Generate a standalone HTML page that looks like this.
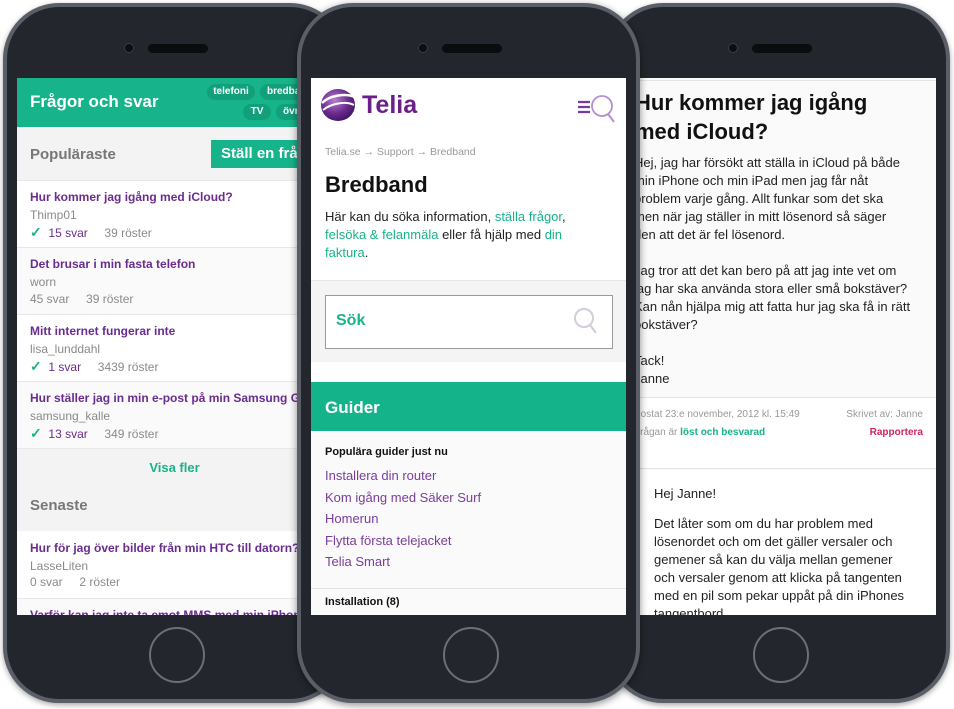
<!DOCTYPE html>
<html><head><meta charset="utf-8"><style>
*{margin:0;padding:0;box-sizing:border-box}
body{width:954px;height:709px;background:#fff;position:relative;overflow:hidden;font-family:"Liberation Sans",Arial,sans-serif}
.ph{position:absolute;top:3px;width:343px;height:700px;border-radius:56px;background:#23262c;border:4px solid #5a5e66;box-shadow:0 2px 6px rgba(0,0,0,.35)}
.cam{position:absolute;top:36px;width:10px;height:10px;border-radius:50%;background:#0d0e10;border:1px solid #3a3d44}
.spk{position:absolute;top:37px;width:60px;height:9px;border-radius:5px;background:#0b0c0e}
.btn{position:absolute;top:620px;width:56px;height:56px;border-radius:50%;border:2.5px solid #6a6f78}
.scr{position:absolute;top:71px;left:10px;width:315px;height:537px;overflow:hidden;background:#fff}
.a{position:absolute;white-space:nowrap}
.g{color:#17b38a}.p{color:#6a2c8e}
.lt{font-size:12px;font-weight:bold;color:#6a2c8e}
.lu{font-size:12px;color:#8a8a8a}
.chk{color:#17b38a;font-weight:bold;font-size:14px}
</style></head><body>

<!-- LEFT PHONE -->
<div class="ph" style="left:3px;z-index:1">
 <div class="cam" style="left:117px"></div><div class="spk" style="left:141px"></div>
 <div class="btn" style="left:142px"></div>
 <div class="scr" style="background:#f3f3f3">
  <div class="a" style="left:0;top:0;width:315px;height:49px;background:#17b38a"></div>
  <div class="a" style="left:13px;top:14px;color:#fff;font-weight:bold;font-size:17px">Frågor och svar</div>
  <div class="a" style="left:190px;top:6px;height:16px;width:48px;border-radius:8px;background:#12a07b;color:#fff;font-size:10px;font-weight:bold;text-align:center;line-height:16px">telefoni</div>
  <div class="a" style="left:243px;top:6px;height:16px;width:60px;border-radius:8px;background:#12a07b;color:#fff;font-size:10px;font-weight:bold;padding-left:7px;line-height:16px">bredband</div>
  <div class="a" style="left:226px;top:26px;height:16px;width:28px;border-radius:8px;background:#12a07b;color:#fff;font-size:10px;font-weight:bold;text-align:center;line-height:16px">TV</div>
  <div class="a" style="left:259px;top:26px;height:16px;width:40px;border-radius:8px;background:#12a07b;color:#fff;font-size:10px;font-weight:bold;padding-left:7px;line-height:16px">övrigt</div>
  <div class="a" style="left:13px;top:68px;color:#777;font-weight:bold;font-size:15px">Populäraste</div>
  <div class="a" style="left:194px;top:62px;width:130px;height:28px;background:#17b38a;color:#fff;font-weight:bold;font-size:15px;line-height:28px;padding-left:10px">Ställ en fråga</div>
  <div class="a" style="left:0;top:102px;width:315px;height:67px;background:#fff;border-top:1px solid #e8e8e8"></div>
  <div class="a lt" style="left:13px;top:112px">Hur kommer jag igång med iCloud?</div>
  <div class="a lu" style="left:13px;top:130px">Thimp01</div>
  <div class="a lu" style="left:13px;top:146px"><span class="chk">✓</span>&nbsp;&nbsp;<span style="color:#6a2c8e">15 svar</span>&nbsp;&nbsp;&nbsp;&nbsp;&nbsp;39 röster</div>
  <div class="a" style="left:0;top:169px;width:315px;height:67px;background:#fafafa;border-top:1px solid #e8e8e8"></div>
  <div class="a lt" style="left:13px;top:179px">Det brusar i min fasta telefon</div>
  <div class="a lu" style="left:13px;top:197px">worn</div>
  <div class="a lu" style="left:13px;top:214px">45 svar&nbsp;&nbsp;&nbsp;&nbsp;&nbsp;39 röster</div>
  <div class="a" style="left:0;top:236px;width:315px;height:67px;background:#fff;border-top:1px solid #e8e8e8"></div>
  <div class="a lt" style="left:13px;top:246px">Mitt internet fungerar inte</div>
  <div class="a lu" style="left:13px;top:264px">lisa_lunddahl</div>
  <div class="a lu" style="left:13px;top:280px"><span class="chk">✓</span>&nbsp;&nbsp;<span style="color:#6a2c8e">1 svar</span>&nbsp;&nbsp;&nbsp;&nbsp;&nbsp;3439 röster</div>
  <div class="a" style="left:0;top:303px;width:315px;height:67px;background:#fafafa;border-top:1px solid #e8e8e8"></div>
  <div class="a lt" style="left:13px;top:313px">Hur ställer jag in min e-post på min Samsung Galaxy?</div>
  <div class="a lu" style="left:13px;top:331px">samsung_kalle</div>
  <div class="a lu" style="left:13px;top:347px"><span class="chk">✓</span>&nbsp;&nbsp;<span style="color:#6a2c8e">13 svar</span>&nbsp;&nbsp;&nbsp;&nbsp;&nbsp;349 röster</div>
  <div class="a" style="left:0;top:370px;width:315px;height:1px;background:#e8e8e8"></div>
  <div class="a g" style="left:0;top:382px;width:315px;text-align:center;font-weight:bold;font-size:13px">Visa fler</div>
  <div class="a" style="left:13px;top:419px;color:#777;font-weight:bold;font-size:15px">Senaste</div>
  <div class="a" style="left:0;top:453px;width:315px;height:67px;background:#fff"></div>
  <div class="a lt" style="left:13px;top:463px">Hur för jag över bilder från min HTC till datorn?</div>
  <div class="a lu" style="left:13px;top:481px">LasseLiten</div>
  <div class="a lu" style="left:13px;top:497px">0 svar&nbsp;&nbsp;&nbsp;&nbsp;&nbsp;2 röster</div>
  <div class="a" style="left:0;top:520px;width:315px;height:20px;background:#fafafa;border-top:1px solid #e8e8e8"></div>
  <div class="a lt" style="left:13px;top:530px">Varför kan jag inte ta emot MMS med min iPhone?</div>
 </div>
</div>

<!-- RIGHT PHONE -->
<div class="ph" style="left:607px;z-index:1">
 <div class="cam" style="left:117px"></div><div class="spk" style="left:141px"></div>
 <div class="btn" style="left:142px"></div>
 <div class="scr" style="background:#fafafa;font-size:13px;color:#222">
  <div class="a" style="left:0;top:2px;width:315px;height:1px;background:#e4e4e4"></div>
  <div class="a" style="left:14px;top:10px;font-size:22px;font-weight:bold;color:#111;line-height:29px">Hur kommer jag igång<br>med iCloud?</div>
  <div class="a" style="left:13px;top:76px;line-height:18px">Hej, jag har försökt att ställa in iCloud på både<br>min iPhone och min iPad men jag får nåt<br>problem varje gång. Allt funkar som det ska<br>men när jag ställer in mitt lösenord så säger<br>den att det är fel lösenord.<br><br>Jag tror att det kan bero på att jag inte vet om<br>jag har ska använda stora eller små bokstäver?<br>Kan nån hjälpa mig att fatta hur jag ska få in rätt<br>bokstäver?<br><br>Tack!<br>Janne</div>
  <div class="a" style="left:0;top:319px;width:315px;height:72px;background:#fff;border-top:1px solid #e4e4e4;border-bottom:1px solid #e4e4e4"></div>
  <div class="a" style="left:13px;top:331px;font-size:10px;color:#999">Postat 23:e november, 2012 kl. 15:49</div>
  <div class="a" style="right:13px;top:331px;font-size:10px;color:#999">Skrivet av: Janne</div>
  <div class="a" style="left:13px;top:349px;font-size:10px;color:#999">Frågan är <span class="g" style="font-weight:bold">löst och besvarad</span></div>
  <div class="a" style="right:13px;top:349px;font-size:10px;color:#d0245a;font-weight:bold">Rapportera</div>
  <div class="a" style="left:0;top:392px;width:315px;height:150px;background:#fff"></div>
  <div class="a" style="left:33px;top:408px">Hej Janne!</div>
  <div class="a" style="left:33px;top:437px;line-height:18px">Det låter som om du har problem med<br>lösenordet och om det gäller versaler och<br>gemener så kan du välja mellan gemener<br>och versaler genom att klicka på tangenten<br>med en pil som pekar uppåt på din iPhones<br>tangentbord.</div>
 </div>
</div>

<!-- MIDDLE PHONE -->
<div class="ph" style="left:297px;z-index:3;box-shadow:0 2px 8px rgba(0,0,0,.45)">
 <div class="cam" style="left:117px"></div><div class="spk" style="left:141px"></div>
 <div class="btn" style="left:142px"></div>
 <div class="scr">
  <svg class="a" style="left:9px;top:9px" width="36" height="36" viewBox="0 0 36 36">
   <defs><radialGradient id="sp" cx="0.4" cy="0.35" r="0.7"><stop offset="0" stop-color="#b77fd0"/><stop offset="0.6" stop-color="#6a2a8e"/><stop offset="1" stop-color="#3e1360"/></radialGradient></defs>
   <ellipse cx="18" cy="18" rx="17" ry="16" fill="url(#sp)"/>
   <path d="M2 16 C10 8 26 6 35 10" stroke="#fff" stroke-width="2.5" fill="none"/>
   <path d="M3 23 C12 16 26 14 34 18" stroke="#fff" stroke-width="2" fill="none"/>
  </svg>
  <div class="a" style="left:51px;top:13px;font-size:25px;font-weight:bold;color:#6a1f8a">Telia</div>
  <svg class="a" style="left:266px;top:15px" width="40" height="32" viewBox="0 0 40 32">
   <path d="M1 9h12M1 14h12M1 19h12" stroke="#7a3a9e" stroke-width="2.2"/>
   <circle cx="25" cy="13" r="10" stroke="#b58fcf" stroke-width="1.8" fill="none"/>
   <path d="M31 21l6 8" stroke="#b58fcf" stroke-width="2"/>
  </svg>
  <div class="a" style="left:14px;top:68px;font-size:10.5px;color:#999">Telia.se → Support → Bredband</div>
  <div class="a" style="left:14px;top:94px;font-size:22px;font-weight:bold;color:#111">Bredband</div>
  <div class="a" style="left:14px;top:130px;font-size:13px;line-height:18px;color:#222">Här kan du söka information, <span class="g">ställa frågor</span>,<br><span class="g">felsöka &amp; felanmäla</span> eller få hjälp med <span class="g">din</span><br><span class="g">faktura</span>.</div>
  <div class="a" style="left:0;top:202px;width:315px;height:82px;background:#f4f4f4;border-top:1px solid #e6e6e6"></div>
  <div class="a" style="left:14px;top:217px;width:288px;height:54px;background:#fff;border:1px solid #9a9a9a"></div>
  <div class="a g" style="left:25px;top:234px;font-size:16px;font-weight:bold">Sök</div>
  <svg class="a" style="left:262px;top:229px" width="26" height="30" viewBox="0 0 26 30">
   <circle cx="11" cy="11" r="9" stroke="#d4ccd9" stroke-width="2" fill="none"/>
   <path d="M17 18l6 8" stroke="#d4ccd9" stroke-width="2.2"/>
  </svg>
  <div class="a" style="left:0;top:304px;width:315px;height:49px;background:#15b38a"></div>
  <div class="a" style="left:14px;top:320px;font-size:17px;font-weight:bold;color:#fff">Guider</div>
  <div class="a" style="left:0;top:353px;width:315px;height:184px;background:#fafafa"></div>
  <div class="a" style="left:14px;top:368px;font-size:11px;font-weight:bold;color:#111">Populära guider just nu</div>
  <div class="a p" style="left:14px;top:387px;font-size:13px;line-height:21.6px;color:#7a3d9c">Installera din router<br>Kom igång med Säker Surf<br>Homerun<br>Flytta första telejacket<br>Telia Smart</div>
  <div class="a" style="left:0;top:510px;width:315px;height:1px;background:#e2e2e2"></div>
  <div class="a" style="left:14px;top:518px;font-size:11px;font-weight:bold;color:#111">Installation (8)</div>
 </div>
</div>
</body></html>
